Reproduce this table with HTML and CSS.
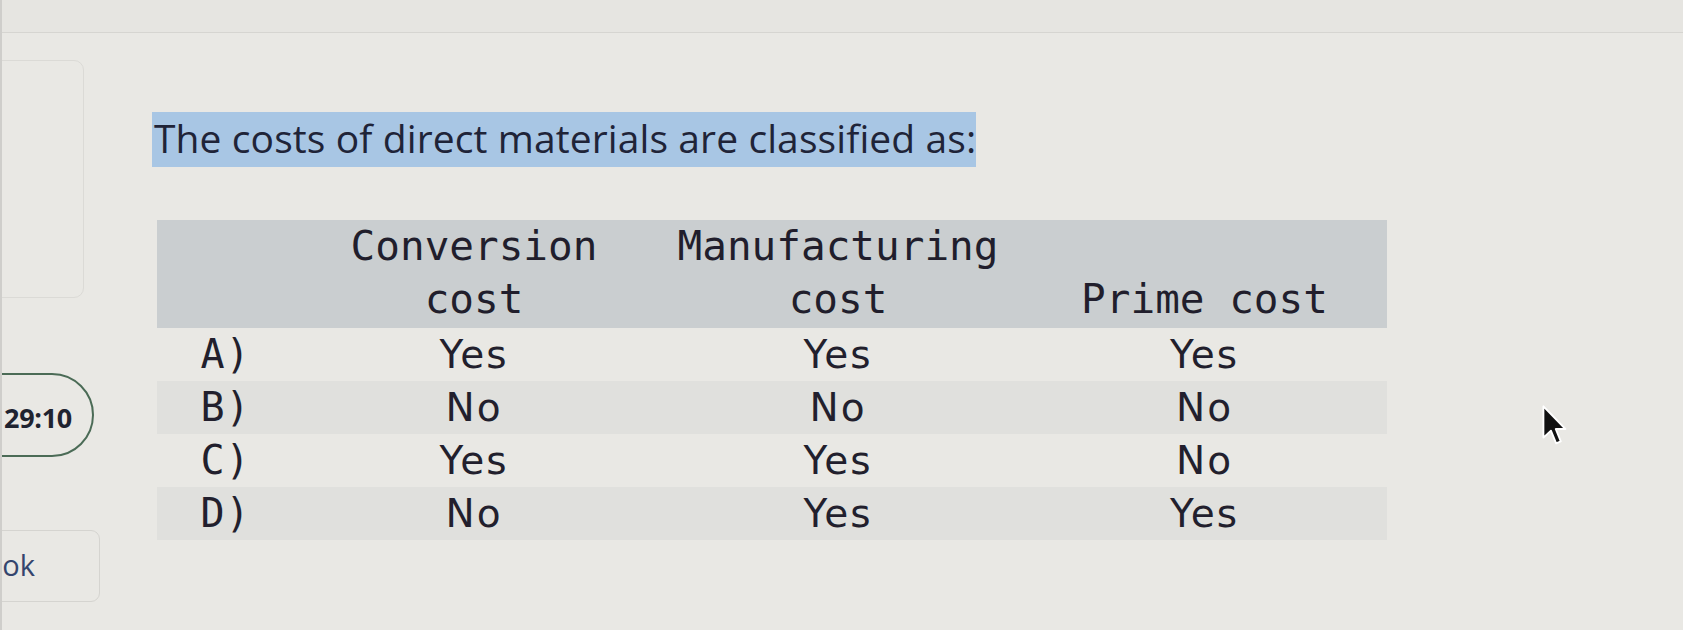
FILE: index.html
```html
<!DOCTYPE html>
<html lang="en">
<head>
<meta charset="utf-8">
<title>Question</title>
<link rel="stylesheet" href="styles.css">
</head>
<body>
<div class="topbar"></div>
<div class="layout">
  <aside class="side">
    <div class="side-card"></div>
    <div class="timer"><span class="timer-text">29:10</span></div>
    <div class="ebook"><span class="ebook-text">eBook</span></div>
  </aside>
  <main class="main">
    <p class="question"><span class="question-text">The costs of direct materials are classified as:</span></p>
    <table class="answers">
      <colgroup>
        <col class="c0"><col class="c1"><col class="c2"><col class="c3">
      </colgroup>
      <thead>
        <tr>
          <th></th>
          <th>Conversion cost</th>
          <th>Manufacturing cost</th>
          <th>Prime cost</th>
        </tr>
      </thead>
      <tbody>
        <tr><td class="label">A)</td><td>Yes</td><td>Yes</td><td>Yes</td></tr>
        <tr class="alt"><td class="label">B)</td><td>No</td><td>No</td><td>No</td></tr>
        <tr><td class="label">C)</td><td>Yes</td><td>Yes</td><td>No</td></tr>
        <tr class="alt"><td class="label">D)</td><td>No</td><td>Yes</td><td>Yes</td></tr>
      </tbody>
    </table>
  </main>
</div>
<svg class="cursor" width="28" height="44" viewBox="0 0 24 38" aria-hidden="true">
  <path d="M2 2 L2 29 L8.5 23 L13 34 L17 32.3 L12.6 21.6 L21 21.6 Z" fill="#111" stroke="#fff" stroke-width="1.6" stroke-linejoin="round"/>
</svg>
</body>
</html>
```

FILE: styles.css
```css
html, body {
  margin: 0;
  padding: 0;
}
body {
  background: #e9e8e4;
  width: 1683px;
  height: 630px;
  overflow: hidden;
  position: relative;
  font-family: "Open Sans", "Lato", sans-serif;
  color: #252a3f;
  border-left: 2px solid #cfcecb;
  box-sizing: border-box;
}
.topbar {
  height: 32px;
  background: #e6e5e1;
  border-bottom: 1px solid #d6d5d1;
}
.layout {
  display: grid;
  grid-template-columns: 150px 1fr;
}
.side {
  display: flex;
  flex-direction: column;
  align-items: flex-start;
}
.side-card {
  margin-top: 27px;
  margin-left: -24px;
  width: 106px;
  height: 238px;
  border: 1.5px solid #dbdad6;
  border-radius: 10px;
  box-sizing: border-box;
  background: #e9e8e4;
}
.timer {
  margin-top: 75px;
  margin-left: -44px;
  width: 136px;
  height: 84px;
  border: 2px solid #4b6b56;
  border-radius: 42px;
  box-sizing: border-box;
  display: flex;
  align-items: center;
  justify-content: flex-end;
  padding-right: 20px;
  padding-top: 4px;
}
.timer-text {
  font-family: "Open Sans", "Lato", sans-serif;
  font-weight: 700;
  font-size: 27px;
  color: #1f2330;
  letter-spacing: -0.3px;
}
.ebook {
  margin-top: 73px;
  margin-left: -100px;
  width: 198px;
  height: 72px;
  border: 1.5px solid #d5d4d0;
  border-radius: 9px;
  box-sizing: border-box;
  display: flex;
  align-items: center;
  justify-content: flex-end;
  padding-right: 64px;
  padding-bottom: 4px;
}
.ebook-text {
  font-family: "Open Sans", "Lato", sans-serif;
  font-size: 29px;
  color: #34456e;
}
.main {
  padding-top: 79px;
}
.question {
  margin: 0 0 53px 0;
}
.question-text {
  display: inline-block;
  background: #a8c6e4;
  font-size: 39px;
  font-weight: 500;
  line-height: 51px;
  height: 55px;
  box-sizing: border-box;
  padding: 0 0 0 2px;
  color: #1f2438;
  letter-spacing: 0.1px;
}
.answers {
  border-collapse: collapse;
  table-layout: fixed;
  width: 1230px;
  margin-left: 5px;
}
.c0 { width: 137px; }
.c1 { width: 360px; }
.c2 { width: 368px; }
.c3 { width: 365px; }
.answers th {
  background: #caced0;
  font-family: "DejaVu Sans Mono", monospace;
  font-weight: 400;
  font-size: 41px;
  line-height: 53px;
  color: #211e2c;
  text-align: center;
  vertical-align: bottom;
  padding: 0 0 2px 0;
}
.answers td {
  font-family: "DejaVu Sans", sans-serif;
  font-size: 39px;
  line-height: 53px;
  height: 53px;
  padding: 0;
  text-align: center;
  color: #221f2d;
  letter-spacing: 2px;
}
.answers td.label {
  font-family: "DejaVu Sans Mono", monospace;
  font-size: 40px;
  padding-left: 0;
  letter-spacing: 1px;
}
.answers tr.alt td {
  background: #e0e0dd;
}
.cursor {
  position: absolute;
  left: 1539px;
  top: 404px;
}
```
